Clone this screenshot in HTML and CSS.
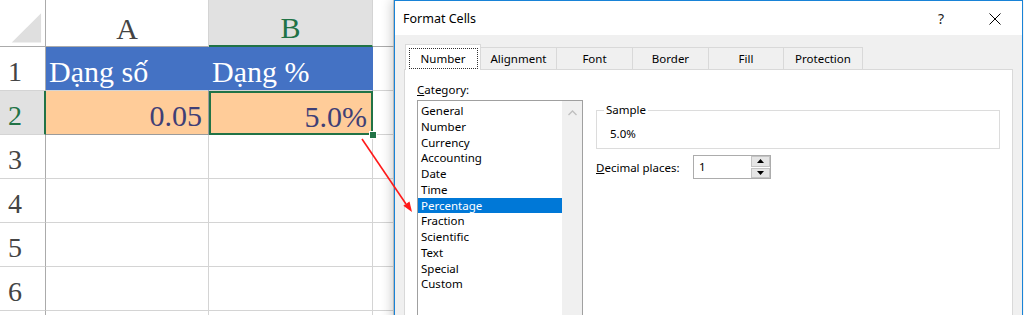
FILE: index.html
```html
<!DOCTYPE html>
<html lang="vi">

<head>
    <meta charset="UTF-8">
    <title>Format Cells - Percentage</title>
    <link rel="stylesheet" href="styles.css">
</head>

<body>
    <div class="screen">
        <!-- Hoja de cálculo -->
        <div class="sheet">
            <div class="corner">
                <svg width="46" height="46" viewBox="0 0 46 46"><polygon points="12,43 42,13 42,43" fill="#dfdfdf" /></svg>
            </div>
            <div class="col-head">A</div>
            <div class="col-head selected">B</div>
            <div class="col-head"></div>

            <div class="row-head">1</div>
            <div class="cell title-cell">Dạng số</div>
            <div class="cell title-cell">Dạng %</div>
            <div class="cell"></div>

            <div class="row-head selected">2</div>
            <div class="cell input-cell">0.05</div>
            <div class="cell input-cell active">5.0%</div>
            <div class="cell"></div>

            <div class="row-head">3</div>
            <div class="cell"></div>
            <div class="cell"></div>
            <div class="cell"></div>

            <div class="row-head">4</div>
            <div class="cell"></div>
            <div class="cell"></div>
            <div class="cell"></div>

            <div class="row-head">5</div>
            <div class="cell"></div>
            <div class="cell"></div>
            <div class="cell"></div>

            <div class="row-head">6</div>
            <div class="cell"></div>
            <div class="cell"></div>
            <div class="cell"></div>

            <div class="row-head"></div>
            <div class="cell"></div>
            <div class="cell"></div>
            <div class="cell"></div>
        </div>

        <!-- Ventana Format Cells -->
        <div class="dialog">
            <div class="titlebar">
                <span class="title">Format Cells</span>
                <span class="help">?</span>
                <span class="close">
                    <svg width="12" height="12" viewBox="0 0 12 12"><path d="M0.5 0.5 L11.5 11.5 M11.5 0.5 L0.5 11.5" stroke="#000" stroke-width="1" fill="none" /></svg>
                </span>
            </div>

            <div class="dialog-body">
                <div class="tabs">
                    <div class="tab active w76"><span class="focus">Number</span></div>
                    <div class="tab w76">Alignment</div>
                    <div class="tab w76">Font</div>
                    <div class="tab w76">Border</div>
                    <div class="tab w75">Fill</div>
                    <div class="tab w79">Protection</div>
                </div>

                <div class="panel">
                    <div class="category">
                        <div class="label"><u>C</u>ategory:</div>
                        <div class="listbox">
                            <ul class="items">
                                <li>General</li>
                                <li>Number</li>
                                <li>Currency</li>
                                <li>Accounting</li>
                                <li>Date</li>
                                <li>Time</li>
                                <li class="picked">Percentage</li>
                                <li>Fraction</li>
                                <li>Scientific</li>
                                <li>Text</li>
                                <li>Special</li>
                                <li>Custom</li>
                            </ul>
                            <div class="scrollbar">
                                <svg width="9" height="6" viewBox="0 0 9 6"><path d="M0.5 5 L4.5 1 L8.5 5" stroke="#bfbfbf" stroke-width="1.3" fill="none" /></svg>
                            </div>
                        </div>
                    </div>

                    <div class="options">
                        <fieldset class="sample">
                            <legend>Sample</legend>
                            <div class="sample-value">5.0%</div>
                        </fieldset>
                        <div class="decimals">
                            <div class="dec-label"><u>D</u>ecimal places:</div>
                            <div class="spin">
                                <div class="spin-value">1</div>
                                <div class="spin-buttons">
                                    <div class="spin-btn"><svg width="7" height="4" viewBox="0 0 7 4"><polygon points="0,4 3.5,0 7,4" fill="#000" /></svg></div>
                                    <div class="spin-btn"><svg width="7" height="4" viewBox="0 0 7 4"><polygon points="0,0 7,0 3.5,4" fill="#000" /></svg></div>
                                </div>
                            </div>
                        </div>
                    </div>
                </div>
            </div>
        </div>

        <!-- Flecha roja -->
        <svg class="arrow" width="1024" height="315" viewBox="0 0 1024 315">
            <line x1="362" y1="139" x2="406" y2="204" stroke="#ff1a1a" stroke-width="1.6" />
            <polygon points="412,212 403.3,205.8 409.5,201.5" fill="#ff1a1a" />
        </svg>
    </div>
</body>

</html>
```

FILE: styles.css
```css
body {
    margin: 0;
    background-color: #ffffff;
    overflow: hidden;
}

.screen {
    position: relative;
    display: flex;
    width: 1024px;
    height: 315px;
    overflow: hidden;
}

/* ---- hoja ---- */

.sheet {
    flex: none;
    width: 394px;
    display: grid;
    grid-template-columns: 46px 163px 164px 1fr;
    grid-template-rows: 47px repeat(7, 44px);
    font-family: "Liberation Serif", "Times New Roman", serif;
    background-color: #ffffff;
}

.sheet > div {
    box-sizing: border-box;
    border-right: 1px solid #d4d4d4;
    border-bottom: 1px solid #d4d4d4;
    display: flex;
    align-items: flex-end;
    line-height: 34px;
    white-space: nowrap;
    overflow: visible;
}

.corner {
    border-right-color: #ababab !important;
    border-bottom-color: #ababab !important;
}

.corner svg {
    display: block;
}

.col-head {
    justify-content: center;
    font-size: 30px;
    color: #444444;
    border-bottom-color: #ababab !important;
}

.col-head.selected {
    background-color: #e1e1e1;
    color: #217346;
    border-bottom: 2px solid #217346 !important;
}

.row-head {
    font-size: 28px;
    color: #444444;
    padding-left: 8px;
    padding-bottom: 1px;
    border-right-color: #ababab !important;
}

.row-head.selected {
    background-color: #e1e1e1;
    color: #217346;
    border-right: 2px solid #217346 !important;
}

.cell {
    font-size: 30px;
    padding-bottom: 1px;
}

.title-cell {
    background-color: #4472c4;
    color: #ffffff;
    padding-left: 3px;
    border-right-color: #4472c4 !important;
}

.input-cell {
    background-color: #ffcc99;
    color: #3f3f76;
    justify-content: flex-end;
    padding-right: 6px;
    border-color: #9b9b9b !important;
}

.input-cell.active {
    position: relative;
    border-right: none !important;
    border-bottom: none !important;
    box-shadow: inset 0 0 0 2px #217346;
    padding-right: 6px;
}

.input-cell.active::after {
    content: "";
    position: absolute;
    right: -4px;
    bottom: -4px;
    width: 6px;
    height: 6px;
    background-color: #217346;
    border: 1px solid #ffffff;
}

/* ---- ventana ---- */

.dialog {
    flex: none;
    width: 629px;
    height: 330px;
    box-sizing: border-box;
    border: 1px solid #1883d7;
    background-color: #f0f0f0;
    box-shadow: -3px 0 10px rgba(0, 0, 0, 0.18);
    font-family: "Noto Sans", "Open Sans", sans-serif;
    font-size: 11.5px;
    color: #000000;
    display: flex;
    flex-direction: column;
    z-index: 1;
}

.titlebar {
    height: 34px;
    background-color: #ffffff;
    display: flex;
    align-items: center;
    padding-left: 8px;
    flex: none;
}

.title {
    font-size: 12.5px;
    flex: 1;
    padding-top: 1px;
}

.help {
    font-size: 14px;
    color: #222;
    margin-right: 45px;
    padding-top: 1px;
}

.close {
    margin-right: 21px;
    display: flex;
    padding-top: 1px;
}

.dialog-body {
    flex: 1;
    display: flex;
    flex-direction: column;
    padding: 9px 9px 0 9px;
}

.tabs {
    display: flex;
    align-items: flex-end;
    padding-left: 1px;
    margin-bottom: -1px;
    position: relative;
    z-index: 1;
}

.tab {
    box-sizing: border-box;
    height: 23px;
    border: 1px solid #d9d9d9;
    border-left: none;
    display: flex;
    align-items: center;
    justify-content: center;
    padding-bottom: 1px;
}

.tab.active {
    height: 26px;
    background-color: #ffffff;
    border-left: 1px solid #d9d9d9;
    border-bottom: none;
    padding-bottom: 0;
    padding-top: 1px;
}

.focus {
    outline: 1px dotted #333333;
    padding: 2px 4px 2px 4px;
    margin: 0 -1px;
    width: 59px;
    text-align: center;
}

.w75 { width: 75px; }
.w76 { width: 76px; }
.w79 { width: 79px; }

.panel {
    flex: 1;
    background-color: #ffffff;
    border: 1px solid #d9d9d9;
    display: flex;
    padding: 12px 0 0 12px;
}

.category {
    width: 166px;
    flex: none;
}

.label {
    line-height: 16px;
    margin-bottom: 2px;
}

.listbox {
    height: 240px;
    box-sizing: border-box;
    border: 1px solid #a0a0a0;
    display: flex;
}

.items {
    list-style: none;
    margin: 0;
    padding: 2px 0 0 0;
    flex: 1;
}

.items li {
    height: 15.75px;
    line-height: 15.75px;
    padding-left: 3px;
}

.items li.picked {
    background-color: #0078d7;
    color: #ffffff;
}

.scrollbar {
    width: 20px;
    background-color: #f0f0f0;
    display: flex;
    justify-content: center;
    padding-top: 9px;
    box-sizing: border-box;
}

.scrollbar svg {
    display: block;
}

.options {
    margin-left: 13px;
    width: 404px;
}

.sample {
    margin: 20px 0 0 0;
    padding: 1px 0 7px 7px;
    border: 1px solid #dcdcdc;
    height: 47px;
    box-sizing: border-box;
}

.sample legend {
    padding: 0 2px;
    line-height: 16px;
}

.sample-value {
    padding-left: 6px;
    line-height: 16px;
    margin-top: 7px;
}

.decimals {
    display: flex;
    align-items: center;
    margin-top: 6px;
}

.dec-label {
    width: 97px;
    flex: none;
    line-height: 16px;
    padding-top: 2px;
}

.spin {
    width: 78px;
    height: 24px;
    box-sizing: border-box;
    border: 1px solid #acacac;
    display: flex;
}

.spin-value {
    flex: 1;
    padding-left: 5px;
    line-height: 21px;
}

.spin-buttons {
    width: 19px;
    display: flex;
    flex-direction: column;
    gap: 1px;
}

.spin-btn {
    flex: 1;
    background-color: #e5e5e5;
    border: 1px solid #c4c4c4;
    display: flex;
    align-items: center;
    justify-content: center;
}

.spin-btn svg {
    display: block;
}

.arrow {
    position: absolute;
    left: 0;
    top: 0;
    z-index: 2;
    pointer-events: none;
}
```
